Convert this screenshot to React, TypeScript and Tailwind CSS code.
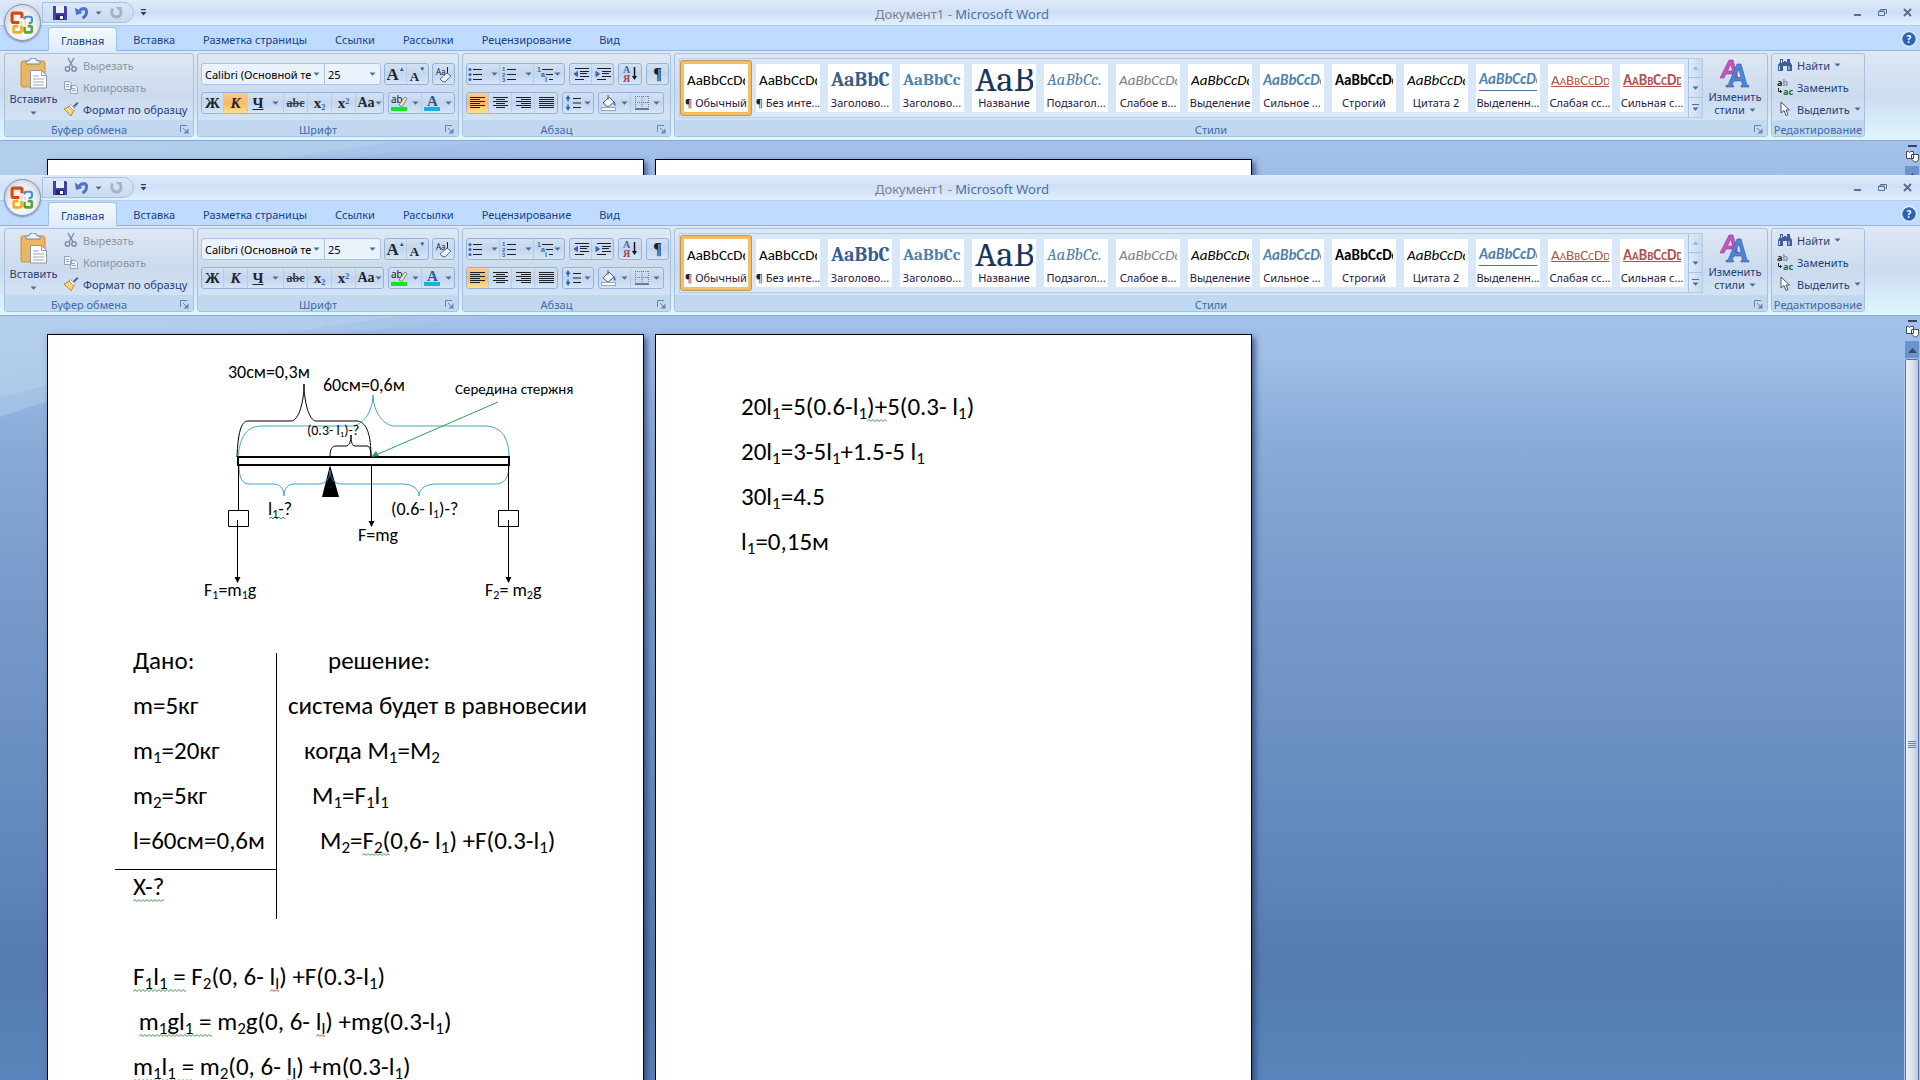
import type { ReactNode } from 'react';
import clsx from 'clsx';

const TABS = ['Главная', 'Вставка', 'Разметка страницы', 'Ссылки', 'Рассылки', 'Рецензирование', 'Вид'];

const CALIBRI = "font-['Carlito','Calibri','Lato',sans-serif]";
const CAMBRIA = "font-['Caladea','Cambria','Liberation_Serif',serif]";

const STYLES = [
  { name: '¶ Обычный', sample: 'AaBbCcDd', look: 'text-[15px] text-black' },
  { name: '¶ Без инте...', sample: 'AaBbCcDd', look: 'text-[15px] text-black' },
  { name: 'Заголово...', sample: 'AaBbCc', look: `${CAMBRIA} text-[20px] font-bold text-[#365f8f]` },
  { name: 'Заголово...', sample: 'AaBbCc', look: `${CAMBRIA} text-[17px] font-bold text-[#4f81ad]` },
  { name: 'Название', sample: 'AaB', look: `${CAMBRIA} text-[36px] text-[#17365d]` },
  { name: 'Подзагол...', sample: 'AaBbCc.', look: `${CAMBRIA} text-[17px] italic text-[#4f81ad]` },
  { name: 'Слабое в...', sample: 'AaBbCcDd', look: 'text-[15px] italic text-[#808080]' },
  { name: 'Выделение', sample: 'AaBbCcDd', look: 'text-[15px] italic text-black' },
  { name: 'Сильное ...', sample: 'AaBbCcDd', look: 'text-[15px] italic font-bold text-[#4f81ad]' },
  { name: 'Строгий', sample: 'AaBbCcDd', look: 'text-[15px] font-bold text-black' },
  { name: 'Цитата 2', sample: 'AaBbCcDd', look: 'text-[15px] italic text-black' },
  { name: 'Выделенн...', sample: 'AaBbCcDd', look: 'text-[15px] italic font-bold text-[#4f81ad] border-b border-[#4f6f9d]' },
  { name: 'Слабая сс...', sample: 'AaBbCcDd', look: 'text-[15px] [font-variant:small-caps] underline text-[#b0514e]' },
  { name: 'Сильная с...', sample: 'AaBbCcDd', look: 'text-[15px] [font-variant:small-caps] underline font-bold text-[#b0514e]' },
];

function Arrow({ className }: { className?: string }) {
  return (
    <svg width="7" height="4" viewBox="0 0 7 4" className={clsx('shrink-0', className)}>
      <path d="M0.5 0.5h6L3.5 3.8z" fill="#4a6d9e" />
    </svg>
  );
}

// Row of joined ribbon buttons
function Strip({ children }: { children: ReactNode }) {
  return (
    <div className="flex h-[22px] shrink-0 rounded-[3px] border border-[#93b3da] divide-x divide-[#b8cce4] overflow-hidden bg-linear-to-b from-[#d3e1f2] via-[#c3d6ee] to-[#d6e5f6]">
      {children}
    </div>
  );
}

function Tool({ label, className, active, children }: { label: string; className: string; active?: boolean; children: ReactNode }) {
  return (
    <button
      aria-label={label}
      className={clsx(
        'flex h-full items-center justify-center gap-1 leading-none',
        active && 'bg-linear-to-b from-[#fbc98d] via-[#fdb863] to-[#fde28a]',
        className,
      )}
    >
      {children}
    </button>
  );
}

function Group({ title, launcher, className, children }: { title: string; launcher?: boolean; className?: string; children: ReactNode }) {
  return (
    <section
      className={clsx(
        'flex shrink-0 flex-col overflow-hidden rounded-[3px] border border-[#a5c2e0] bg-linear-to-b from-[#dfe8f4] via-[#cbdaed] to-[#d8e8f8]',
        className,
      )}
    >
      <div className="flex h-[68px]">{children}</div>
      <footer className="flex h-[16px] items-center bg-[#c1d8f0] pt-0.5 text-[#3e6aaa]">
        <span className="flex-1 text-center">{title}</span>
        {launcher && (
          <button aria-label={`${title}: параметры`} className="ml-[7px] mr-1">
            <svg width="9" height="9" viewBox="0 0 9 9" fill="none">
              <path d="M0.5 7V0.5H7" stroke="#6583ac" />
              <path d="M3 3l4 4" stroke="#6583ac" />
              <path d="M8.5 3.5v5h-5z" fill="#6583ac" />
            </svg>
          </button>
        )}
      </footer>
    </section>
  );
}

function OfficeOrb() {
  return (
    <button aria-label="Office" className="absolute left-1 top-1 z-10 flex size-[37px] items-center justify-center rounded-full border border-[#8494ab] bg-radial-[at_50%_65%] from-white via-[#edf0f5] to-[#b4bfcf] shadow-[0_1px_2px_rgba(60,80,120,.6)]">
      <svg width="25" height="25" viewBox="0 0 24 24" fill="none">
        <path d="M9 12H3.500a1.500 1.500 0 0 1-1.500-1.500V4.500A1.500 1.500 0 0 1 3.500 3H10a1.500 1.500 0 0 1 1.500 1.500V8" stroke="#d9480f" strokeWidth="3" />
        <path d="M14 9V8a1.500 1.500 0 0 1 1.500-1.500h4A1.500 1.500 0 0 1 21 8v3a1.500 1.500 0 0 1-1.500 1.500H18" stroke="#3f8fd2" strokeWidth="2" />
        <path d="M11 15v5a1.500 1.500 0 0 1-1.500 1.500H5A1.500 1.500 0 0 1 3.500 20v-3A1.500 1.500 0 0 1 5 15.500h3" stroke="#f2ab1d" strokeWidth="2.500" />
        <path d="M14 16v4a1.500 1.500 0 0 0 1.500 1.500h4A1.500 1.500 0 0 0 21 20v-3a1.500 1.500 0 0 0-1.500-1.500H17" stroke="#5da33a" strokeWidth="2.500" />
        <path d="M11 11.500h1M14 11.500h1M11 13.500h1M14 13.500h1" stroke="#c98a3a" />
      </svg>
    </button>
  );
}

function TitleBar() {
  return (
    <header className="flex h-[26px] items-center border-b border-[#b0cfee] bg-linear-to-b from-[#dfebfb] via-[#cfdff6] to-[#e1f0fe]">
      <div className="flex flex-1 items-center">
        <div className="ml-[42px] flex h-[21px] w-[92px] items-center gap-2 rounded-r-full border border-[#a9c1e0] bg-linear-to-b from-[#dbe7f7] to-[#c9daf1] pl-[10px]">
          <button aria-label="Сохранить">
            <svg width="14" height="14" viewBox="0 0 14 14">
              <path d="M0 0h13l1 1v13H0z" fill="#3d43a6" />
              <rect x="3" y="0" width="8" height="7" fill="#e9effc" />
              <rect x="3" y="9" width="8" height="5" fill="#23286e" />
              <rect x="7" y="10" width="3" height="3" fill="#fff" />
            </svg>
          </button>
          <button aria-label="Отменить" className="flex items-center gap-1.5">
            <svg width="14" height="13" viewBox="0 0 14 13" fill="none">
              <path d="M4 5C8 1 12 2.500 11.500 6.500 11.300 9 9.500 11 7.500 12" stroke="#4a74c6" strokeWidth="3" />
              <path d="M0 1.500l1 7.500 6.500-2z" fill="#4a74c6" />
            </svg>
            <Arrow />
          </button>
          <button aria-label="Вернуть">
            <svg width="13" height="13" viewBox="0 0 13 13" fill="none">
              <path d="M2.500 2.500C0.500 8 3 11 6.500 11S12 8 10.500 3.500" stroke="#a3b3cc" strokeWidth="2.800" />
              <path d="M5.500 1h6v5.500z" fill="#a3b3cc" />
            </svg>
          </button>
        </div>
        <button aria-label="Настройка панели быстрого доступа" className="ml-1.5">
          <svg width="7" height="7" viewBox="0 0 7 7">
            <path d="M1 0h5v1.200H1zM0.500 3h6L3.500 6.500z" fill="#27406f" />
          </svg>
        </button>
      </div>
      <h1 className="pl-3 pt-1 text-[13px] text-[#7c808c]">
        Документ1 - <span className="text-[#4a72a8]">Microsoft Word</span>
      </h1>
      <div className="flex flex-1 items-center justify-end gap-[16px] pr-[8px] text-[#5b6f8e]">
        <button aria-label="Свернуть">
          <svg width="9" height="9" viewBox="0 0 9 9"><path d="M1 6h7v2H1z" fill="currentColor" /></svg>
        </button>
        <button aria-label="Восстановить">
          <svg width="9" height="9" viewBox="0 0 9 9" fill="none" stroke="currentColor">
            <path d="M2.500 2.500v-1h6v4h-1M0.500 3h6M0.500 3.500h6v4h-6z" />
          </svg>
        </button>
        <button aria-label="Закрыть">
          <svg width="9" height="9" viewBox="0 0 9 9" stroke="currentColor" strokeWidth="2"><path d="M1 1l7 7M8 1L1 8" /></svg>
        </button>
      </div>
    </header>
  );
}

function TabRow() {
  return (
    <nav className="flex h-[25px] items-end gap-1 border-b border-[#8fb4e0] bg-[#bfdbff] pl-[48px] pr-1 text-[#15428b]">
      {TABS.map((tab, i) => (
        <button
          key={tab}
          className={clsx(
            'px-[12px] pt-0.5',
            i === 0
              ? '-mb-px h-[24px] rounded-t-[4px] border border-b-0 border-[#9dc3ea] bg-linear-to-b from-[#f4f9ff] to-[#e2ebf6] px-[10px]'
              : 'h-[23px]',
          )}
        >
          {tab}
        </button>
      ))}
      <button aria-label="Справка" className="mb-1 ml-auto flex size-[14px] items-center justify-center rounded-full border border-[#5d86bd] bg-[#2a62b4] text-[10px] font-bold leading-none text-white outline outline-white/70">
        ?
      </button>
    </nav>
  );
}

function Clipboard() {
  return (
    <Group title="Буфер обмена" launcher className="w-[190px]">
      <button className="flex w-[57px] flex-col items-center pt-1 text-[#1e3f7d]">
        <svg width="28" height="31" viewBox="0 0 28 31">
          <rect x="1" y="3" width="24" height="26" rx="2" fill="#e9b662" stroke="#c3913f" />
          <path d="M6 6V3h3a4 3 0 0 1 8 0h3v3z" fill="#f1f3f6" stroke="#7b8696" />
          <path d="M10.500 12.500h11l5 5v12.500h-16z" fill="#fff" stroke="#8995a8" />
          <path d="M21.500 12.500v5h5M13 18h6M13 21h11M13 24h11M13 27h11" stroke="#9aa5b8" fill="none" />
        </svg>
        <span className="mt-[2px] leading-[16px]">Вставить</span>
        <Arrow className="mt-1" />
      </button>
      <div className="flex flex-col pl-px [&>button]:h-[22px]">
        <button disabled className="flex items-center gap-1 text-[#8d95a3]">
          <svg width="16" height="16" viewBox="0 0 16 16" fill="none" stroke="#7d90ae" strokeWidth="1.500">
            <path d="M5 1l5 9M11 1L6 10" />
            <circle cx="4.500" cy="12" r="2.200" />
            <circle cx="11" cy="12" r="2.200" />
          </svg>
          Вырезать
        </button>
        <button disabled className="flex items-center gap-1 text-[#8d95a3]">
          <svg width="16" height="16" viewBox="0 0 16 16" fill="#eef2f8" stroke="#94a4bd">
            <path d="M1.500 2.500h5l2 2v6h-7zM7.500 6.500h5l2 2v6h-7z" />
            <path d="M3 5.500h3M3 7.500h3M9 9.500h3M9 11.500h4" />
          </svg>
          Копировать
        </button>
        <button className="flex items-center gap-1 text-[#1e3f7d]">
          <svg width="16" height="16" viewBox="0 0 16 16">
            <path d="M1 8l6-3 4 4-3 6z" fill="#f4d77a" stroke="#b08d34" />
            <path d="M6 5l5 5 1.500-1.500-5-5z" fill="#fff" stroke="#7b7f8c" strokeWidth=".7" />
            <path d="M10 5l4-4 1.500 1.500-4 4z" fill="#5a5fa8" />
          </svg>
          Формат по образцу
        </button>
      </div>
    </Group>
  );
}

function Combo({ label, value, className }: { label: string; value: string; className: string }) {
  return (
    <div className={clsx('relative h-[22px] border border-[#a9c3e6] bg-[#eaf2fb]', className)}>
      <select aria-label={label} className="h-full w-full appearance-none overflow-hidden pl-[3px] pr-[13px] text-clip text-black">
        <option>{value}</option>
      </select>
      <Arrow className="pointer-events-none absolute right-1 top-2" />
    </div>
  );
}

const serifGlyph = "font-['Liberation_Serif',serif] font-bold text-[#20242c]";

function FontGroup({ italic }: { italic?: boolean }) {
  return (
    <Group title="Шрифт" launcher className="w-[262px]">
      <div className="flex flex-col gap-[7px] pl-[3px] pt-[9px]">
        <div className="flex gap-[3px]">
          <div className="flex">
            <Combo label="Шрифт" value="Calibri (Основной те" className="w-[124px] rounded-l-[3px]" />
            <Combo label="Размер шрифта" value="25" className="-ml-px w-[57px] rounded-r-[3px]" />
          </div>
          <Strip>
            <Tool label="Увеличить размер" className={`w-[22px] ${serifGlyph}`}>
              <span className="text-[17px]">A</span>
              <span className="-ml-1 mb-2.5 text-[6px] text-[#2b4f8f]">▲</span>
            </Tool>
            <Tool label="Уменьшить размер" className={`w-[21px] ${serifGlyph}`}>
              <span className="mt-1 text-[13px]">A</span>
              <span className="-ml-1 mb-2.5 text-[6px] text-[#2b4f8f]">▼</span>
            </Tool>
          </Strip>
          <Strip>
            <Tool label="Очистить формат" className="w-[21px]">
              <svg width="17" height="17" viewBox="0 0 17 17">
                <text x="1" y="9" className="font-['Noto_Sans',sans-serif] text-[8px]" fill="#222">Aa</text>
                <path d="M12.500 1v8" stroke="#222" />
                <path d="M5 13l7-6 4 3-6 6-3-1z" fill="#eef1f8" stroke="#5e6880" />
              </svg>
            </Tool>
          </Strip>
        </div>
        <div className="flex gap-1">
          <Strip>
            <Tool label="Полужирный" className={`w-[22px] text-[15px] ${serifGlyph}`}>Ж</Tool>
            <Tool label="Курсив" active={italic} className={`w-[24px] text-[15px] italic ${serifGlyph}`}>К</Tool>
            <Tool label="Подчеркнутый" className={`w-[36px] text-[15px] ${serifGlyph}`}>
              <span className="mr-1 underline">Ч</span>
              <Arrow />
            </Tool>
            <Tool label="Зачеркнутый" className="w-[24px] font-['Liberation_Serif',serif] text-[12px] font-bold line-through text-[#3a3e46]">abc</Tool>
            <Tool label="Подстрочный" className={`w-[24px] text-[15px] ${serifGlyph}`}>
              <span>x<sub className="text-[8px] text-[#2b5fb0]">2</sub></span>
            </Tool>
            <Tool label="Надстрочный" className={`w-[24px] text-[15px] ${serifGlyph}`}>
              <span>x<sup className="text-[8px] text-[#2b5fb0]">2</sup></span>
            </Tool>
            <Tool label="Регистр" className={`w-[27px] text-[14px] ${serifGlyph}`}>
              <span className="-mr-1">Aa</span>
              <Arrow />
            </Tool>
          </Strip>
          <Strip>
            <Tool label="Цвет выделения" className="w-[33px]">
              <svg width="17" height="18" viewBox="0 0 17 18">
                <text x="0" y="9" className="font-['Noto_Sans',sans-serif] text-[10px]" fill="#222">ab</text>
                <path d="M8 11l6-8 2 1.500-5 8z" fill="#f6f0b4" stroke="#5e6880" strokeWidth=".8" />
                <rect x="0" y="13" width="16" height="4" fill="#12e51c" />
              </svg>
              <Arrow />
            </Tool>
            <Tool label="Цвет текста" className="w-[32px]">
              <svg width="17" height="18" viewBox="0 0 17 18">
                <text x="3" y="12" className="font-['Liberation_Serif',serif] text-[15px] font-bold" fill="#2f5a9a">A</text>
                <rect x="0" y="13" width="16" height="4" fill="#1bb0d8" />
              </svg>
              <Arrow />
            </Tool>
          </Strip>
        </div>
      </div>
    </Group>
  );
}

function Lines({ d, className }: { d: string; className?: string }) {
  return (
    <svg width="15" height="14" viewBox="0 0 15 14" fill="none" stroke="#1c1f26" className={className}>
      <path d={d} />
    </svg>
  );
}

const ListIcon = ({ marks }: { marks: ReactNode }) => (
  <svg width="15" height="15" viewBox="0 0 15 15" fill="none" stroke="#1c1f26" className="mr-1">
    <path d="M5 2.500h9M5 7.500h9M5 12.500h9" />
    <g fill="#3a66ad" stroke="none" className="font-['Liberation_Sans',sans-serif] text-[6px] font-bold">{marks}</g>
  </svg>
);

function ParagraphGroup() {
  return (
    <Group title="Абзац" launcher className="w-[209px]">
      <div className="flex flex-col gap-[7px] pl-[3px] pt-[9px]">
        <div className="flex gap-1">
          <Strip>
            <Tool label="Маркеры" className="w-[33px]">
              <ListIcon marks={<><circle cx="2" cy="2.500" r="1.500" /><circle cx="2" cy="7.500" r="1.500" /><circle cx="2" cy="12.500" r="1.500" /></>} />
              <Arrow />
            </Tool>
            <Tool label="Нумерация" className="w-[34px]">
              <ListIcon marks={<><text x="0" y="4">1</text><text x="0" y="10">2</text><text x="0" y="15">3</text></>} />
              <Arrow />
            </Tool>
            <Tool label="Многоуровневый список" className="w-[30px]">
              <svg width="17" height="15" viewBox="0 0 17 15" fill="none" stroke="#1c1f26">
                <path d="M5 2.500h11M9 7.500h7M12 12.500h4" />
                <g fill="#3a66ad" stroke="none" className="font-['Liberation_Sans',sans-serif] text-[7px] font-bold"><text x="0" y="5">1</text><text x="4" y="10">a</text><text x="8" y="15">i</text></g>
              </svg>
              <Arrow className="-ml-1" />
            </Tool>
          </Strip>
          <Strip>
            {['M4.500 4.500L1 7l3.500 2.500z', 'M1 4.500L4.500 7 1 9.500z'].map((head, i) => (
              <Tool key={head} label={i ? 'Увеличить отступ' : 'Уменьшить отступ'} className={i ? 'w-[21px]' : 'w-[22px]'}>
                <svg width="16" height="14" viewBox="0 0 16 14" fill="none" stroke="#1c1f26">
                  <path d="M2 1.500h14M7 4.500h9M7 6.500h7M7 9.500h9M2 12.500h9" />
                  <path d={head} fill="#2f62b8" stroke="#2f62b8" />
                </svg>
              </Tool>
            ))}
          </Strip>
          <Strip>
            <Tool label="Сортировка" className="w-[22px]">
              <svg width="16" height="18" viewBox="0 0 16 18">
                <g className="font-['Liberation_Serif',serif] text-[10px] font-bold">
                  <text x="1" y="8" fill="#3a66ad">А</text>
                  <text x="1" y="17" fill="#a33f45">Я</text>
                </g>
                <path d="M12.500 2v10" stroke="#111" strokeWidth="1.500" />
                <path d="M10 11h5l-2.500 4z" fill="#111" />
              </svg>
            </Tool>
          </Strip>
          <Strip>
            <Tool label="Непечатаемые знаки" className="w-[21px] font-['Liberation_Serif',serif] text-[16px] font-bold text-[#1c1f26]">¶</Tool>
          </Strip>
        </div>
        <div className="flex gap-1">
          <Strip>
            <Tool label="По левому краю" active className="w-[22px]"><Lines d="M0 1.500h15M0 3.500h10M0 5.500h15M0 7.500h10M0 9.500h15M0 11.500h10" /></Tool>
            <Tool label="По центру" className="w-[23px]"><Lines d="M0 1.500h15M3 3.500h9M0 5.500h15M3 7.500h9M0 9.500h15M3 11.500h9" /></Tool>
            <Tool label="По правому краю" className="w-[23px]"><Lines d="M0 1.500h15M5 3.500h10M0 5.500h15M5 7.500h10M0 9.500h15M5 11.500h10" /></Tool>
            <Tool label="По ширине" className="w-[22px]"><Lines d="M0 1.500h15M0 3.500h15M0 5.500h15M0 7.500h15M0 9.500h15M0 11.500h15" /></Tool>
          </Strip>
          <Strip>
            <Tool label="Междустрочный интервал" className="w-[30px]">
              <svg width="17" height="16" viewBox="0 0 17 16" fill="none" stroke="#1c1f26">
                <path d="M8 3.500h8M8 8h8M8 12.500h8" />
                <path d="M3 3v3.500M3 9.500V13" stroke="#2f62b8" strokeWidth="1.500" />
                <path d="M0.500 4L3 0l2.500 4zM0.500 12L3 16l2.500-4z" fill="#2f62b8" stroke="none" />
              </svg>
              <Arrow className="-ml-0.5" />
            </Tool>
          </Strip>
          <Strip>
            <Tool label="Заливка" className="w-[32px]">
              <svg width="16" height="16" viewBox="0 0 16 16">
                <path d="M2 8l6-6 5 5-6 5z" fill="#f4f6fa" stroke="#566482" />
                <path d="M7 0v5" stroke="#566482" />
                <path d="M13 6c2 2 2 4 1 5-1-1-2-2-1-5" fill="#3f6fc4" />
                <rect x="0.500" y="12.500" width="14" height="3" fill="#fff" stroke="#9aa5b8" />
              </svg>
              <Arrow />
            </Tool>
            <Tool label="Границы" className="w-[32px]">
              <svg width="14" height="14" viewBox="0 0 14 14" fill="none" stroke="#6f7f9c">
                <path d="M0.500 0v12M13.500 0v12M7 0v12M0 0.500h14M0 6.500h14" strokeDasharray="1 1" />
                <path d="M0 13h14" stroke="#4a5878" strokeWidth="1.500" />
              </svg>
              <Arrow />
            </Tool>
          </Strip>
        </div>
      </div>
    </Group>
  );
}

function StylesGroup() {
  return (
    <Group title="Стили" launcher className="w-[1094px]">
      <div className="ml-1 mt-1 flex h-[60px] items-center border border-[#b3cde8] bg-[#d9e8f8]">
        {STYLES.map((s, i) => (
          <button
            key={i}
            className={clsx(
              'flex h-[56px] w-[72px] border-4',
              i === 0 ? 'rounded-[3px] border-[#f4bf62] outline-1 -outline-offset-1 outline-[#c2955a]' : 'border-transparent',
            )}
          >
            <span className="flex h-[48px] w-[64px] flex-col overflow-hidden bg-white px-[3px]">
              <span className="flex h-[31px] flex-col items-start justify-center">
                <span className={clsx('w-[58px] shrink-0 overflow-hidden text-left leading-[22px]', !s.look.includes('Caladea') && CALIBRI, s.look)}>{s.sample}</span>
              </span>
              <span className="-mx-1 whitespace-nowrap text-center leading-[16px] text-[#1a1a48]">{s.name}</span>
            </span>
          </button>
        ))}
        <div className="flex w-[14px] flex-col divide-y divide-[#a9c3e6] border-l border-[#a9c3e6] bg-linear-to-r from-[#dfeaf8] to-[#c5d8f0]">
          <button aria-label="Вверх" className="flex h-[19px] items-center justify-center"><Arrow className="rotate-180 opacity-40" /></button>
          <button aria-label="Вниз" className="flex h-[20px] items-center justify-center"><Arrow /></button>
          <button aria-label="Дополнительно" className="flex h-[19px] flex-col items-center justify-center gap-0.5">
            <i className="h-px w-[7px] bg-[#4a6d9e]" />
            <Arrow />
          </button>
        </div>
      </div>
      <button className="flex flex-1 flex-col items-center pt-[5px] text-[#1e3f7d]">
        <svg width="32" height="30" viewBox="0 0 32 30">
          <path fillRule="evenodd" d="M1 19L10 1h4l5 18h-4l-1-4H7l-2 4zM8.500 12h5l-1.700-7z" fill="#c254ba" stroke="#8f3a93" strokeWidth=".6" />
          <path fillRule="evenodd" d="M7 28v-1.500l2-.500L18 5h4l6 21 2 .500V28h-8v-1.500l1.500-.500-1-4H15l-2 4 1.500.500V28zM16 18.500h6L20 10z" fill="#4c86d2" stroke="#2b5ea8" strokeWidth=".6" />
        </svg>
        <span className="mt-px leading-[13px]">Изменить</span>
        <span className="flex items-center gap-1 leading-[13px]">стили <Arrow /></span>
      </button>
    </Group>
  );
}

function EditingGroup() {
  return (
    <Group title="Редактирование" className="w-[94px]">
      <div className="flex flex-col pl-[5px] text-[#1e3f7d] [&>button]:flex [&>button]:h-[22px] [&>button]:items-center [&>button]:gap-1">
        <button>
          <svg width="16" height="14" viewBox="0 0 16 14" fill="#3f5f98">
            <path d="M3 1h3v3h1v-1h2v1h1V1h3v3l2 3v6h-5V8H8.500 6v5H1V7l2-3z" />
            <path d="M2.500 8v4M12 8v4M4.500 2v3" stroke="#d5e2f4" />
          </svg>
          Найти <Arrow />
        </button>
        <button>
          <svg width="16" height="16" viewBox="0 0 16 16" className="font-['Noto_Sans',sans-serif] text-[9px] font-bold">
            <text x="0" y="7" fill="#20242c">a<tspan fill="#8d95a3">b</tspan></text>
            <text x="6" y="16" fill="#1e6b35">ac</text>
            <path d="M1.500 9v3.500h3M3 11l1.500 1.500L3 14" fill="none" stroke="#20242c" />
          </svg>
          Заменить
        </button>
        <button>
          <svg width="16" height="16" viewBox="0 0 16 16">
            <path d="M4 1v11l3-2.500 2 5 2-1-2-4.500h3.500z" fill="#fff" stroke="#44536f" />
          </svg>
          Выделить <Arrow />
        </button>
      </div>
    </Group>
  );
}

function Scrollbar() {
  return (
    <aside className="flex w-[16px] shrink-0 flex-col items-center pt-1">
      <i className="h-0.5 w-[9px] shrink-0 bg-[#2f4468]" />
      <svg width="13" height="13" viewBox="0 0 13 13" className="my-[3px] shrink-0" fill="#fff" stroke="#3c4a63">
        <path d="M0.500 1.500h2l1 1 1-1h3v7h-7zM5.500 4.500h7v5l-2 2.500h-2l-3-3z" />
      </svg>
      <button aria-label="Прокрутить вверх" className="flex h-[18px] w-[14px] shrink-0 items-center justify-center bg-[#6c94cc]">
        <svg width="9" height="5" viewBox="0 0 9 5"><path d="M0 5l4.500-5L9 5z" fill="#3b4a66" /></svg>
      </button>
      <div className="flex h-[770px] w-[14px] shrink-0 flex-col items-center justify-center gap-px rounded-t-[2px] border border-[#5573a8] bg-linear-to-r from-[#eef2f8] via-[#dce4ee] to-[#b9c7da] outline outline-[#a9c5ea]">
        {[0, 1, 2, 3].map((n) => <i key={n} className="h-px w-2 bg-[#6d7f9b]" />)}
      </div>
    </aside>
  );
}

// Pale sweep across the top left of the work area
function Swoosh() {
  return (
    <svg className="absolute left-0 top-0" width="500" height="110" viewBox="0 0 500 110">
      <defs>
        <linearGradient id="sweep" x1="0" y1="0" x2="1" y2="0">
          <stop offset="0" stopColor="#b9d2ee" stopOpacity=".45" />
          <stop offset="1" stopColor="#b9d2ee" stopOpacity=".2" />
        </linearGradient>
      </defs>
      <path d="M0 0H490Q220 25 0 101z" fill="url(#sweep)" />
      <path d="M0 0H400Q180 30 0 82z" fill="#bcd6ee" fillOpacity=".4" />
    </svg>
  );
}

function WordWindow({ italic, className, children }: { italic?: boolean; className: string; children: ReactNode }) {
  return (
    <div className={clsx('relative flex flex-col overflow-hidden', className)}>
      <OfficeOrb />
      <TitleBar />
      <TabRow />
      <div className="relative flex h-[90px] shrink-0 gap-[3px] border-b border-[#8aaad0] bg-linear-to-b from-[#dfe8f4] via-[#cddcf0] to-[#dff6fd] pl-1 pt-0.5 pb-[3px]">
        <Clipboard />
        <FontGroup italic={italic} />
        <ParagraphGroup />
        <StylesGroup />
        <EditingGroup />
      </div>
      <main className="relative flex min-h-0 flex-1 overflow-hidden bg-[linear-gradient(#a3c1e9_0px,#9fbee8_40px,#8aacd9_120px,#7b9dcd_250px,#6b91c2_420px,#5f85ba_560px,#547cb0_650px,#5a84bb_765px)]">
        <Swoosh />
        <div className="relative flex min-w-0 flex-1 gap-[11px] pl-[47px] pt-[18px]">{children}</div>
        <Scrollbar />
      </main>
    </div>
  );
}

function Page({ children }: { children?: ReactNode }) {
  return (
    <article className={`${CALIBRI} h-[900px] w-[597px] shrink-0 whitespace-pre border border-black bg-white text-[25px] leading-[45px] text-black shadow-[3px_3px_6px_rgba(30,50,90,.7)]`}>
      {children}
    </article>
  );
}

const Sub = ({ children }: { children: ReactNode }) => <sub className="text-[17px]">{children}</sub>;

// Proofing squiggle under a run of text
function Wavy({ red, children }: { red?: boolean; children: ReactNode }) {
  return (
    <span className="relative">
      {children}
      <svg className="absolute bottom-0 left-0 h-[3px] w-full" fill="none">
        <path d={'M0 2.500' + 'l2 -2l2 2'.repeat(40)} stroke={red ? '#c23b3b' : '#3f8f4f'} />
      </svg>
    </span>
  );
}

function LeverDiagram() {
  return (
    <svg width="595" height="303" viewBox="0 0 595 303" fill="none" stroke="#000" className="block">
      <path d="M189 122C190 98 193 86 200 86H243C251 86 256 66 256 49C256 66 261 86 268 86H310C319 88 323 100 323 122" />
      <g stroke="#3fa3c8">
        <path d="M190 122C192 101 199 91 214 91H303C315 91 325 76 325 60C325 76 335 91 347 91H436C452 91 461 101 461 122" />
        <path d="M191 130C191 143 194 149 202 149H226C231 149 236 153 236 161C236 153 240 149 246 149H270C278 149 282 143 282 135C282 143 286 149 294 149H355C363 149 371 153 371 161C371 153 379 149 387 149H447C456 149 461 143 461 130" />
      </g>
      <path d="M282 122C282 114 284 111 288 111H298C301 111 303 107 303 100C303 107 304 111 307 111H319Q323 111 323 122" />
      <rect x="190" y="122" width="271" height="8" strokeWidth="2" fill="#fff" />
      <path d="M282 130l9 32h-17z" fill="#000" stroke="none" />
      <path d="M278 147Q282 143 282 135Q282 143 286 147" stroke="#2d6f9a" />
      <path d="M323.500 131V187M190.500 131v44M189.500 185v58M460.500 131v44M460.500 185v58" />
      <path d="M320.500 186h6l-3 6zM186.500 242h6l-3 6zM457.500 242h6l-3 6z" fill="#000" stroke="none" />
      <path d="M180.500 175.500h20v16h-20zM450.500 175.500h20v16h-20z" />
      <path d="M450 67L328 120" stroke="#2f9a5f" />
      <path d="M323 122l5-6 3 5z" fill="#2f9a5f" stroke="none" />
      <path d={'M221 184' + 'l2 -2l2 2'.repeat(4)} stroke="#3f8f4f" />
      <g fill="#000" stroke="none" className="text-[18px]">
        <text x="180" y="43">30см=0,3м</text>
        <text x="275" y="56">60см=0,6м</text>
        <text x="407" y="59" className="text-[15px]">Середина стержня</text>
        <text x="259" y="100" className="text-[14px]">(0.3- l<tspan dy="2" className="text-[9px]">1</tspan><tspan dy="-2">)-?</tspan></text>
        <text x="220" y="180">l<tspan dy="3" className="text-[12px]">1</tspan><tspan dy="-3">-?</tspan></text>
        <text x="343" y="180">(0.6- l<tspan dy="3" className="text-[12px]">1</tspan><tspan dy="-3">)-?</tspan></text>
        <text x="310" y="206">F=mg</text>
        <text x="156" y="261">F<tspan dy="3" className="text-[12px]">1</tspan><tspan dy="-3">=m</tspan><tspan dy="3" className="text-[12px]">1</tspan><tspan dy="-3">g</tspan></text>
        <text x="437" y="261">F<tspan dy="3" className="text-[12px]">2</tspan><tspan dy="-3">= m</tspan><tspan dy="3" className="text-[12px]">2</tspan><tspan dy="-3">g</tspan></text>
      </g>
    </svg>
  );
}

export default function App() {
  return (
    <div className="flex h-screen flex-col overflow-hidden font-['Noto_Sans','Open_Sans',sans-serif] text-[11px] leading-[15px]">
      <WordWindow italic className="h-[175px] shrink-0">
        <Page />
        <Page />
      </WordWindow>
      <WordWindow className="flex-1">
        <Page>
          <LeverDiagram />
          <div className="flex">
            <div className="mb-[35px] ml-[67px] mt-[15px] h-[266px] w-[162px] border-r border-black">
              <div className="-mt-[15px] pb-[6px] pl-[18px]">
                <p>Дано:</p>
                <p>m=5кг</p>
                <p>m<Sub>1</Sub>=20кг</p>
                <p>m<Sub>2</Sub>=5кг</p>
                <p>l=60см=0,6м</p>
              </div>
              <p className="border-t border-black pl-[18px] leading-[34px]"><Wavy>X-?</Wavy></p>
            </div>
            <div className="pl-[11px]">
              <p className="pl-10">решение:</p>
              <p>система будет в равновесии</p>
              <p className="pl-4">когда M<Sub>1</Sub>=M<Sub>2</Sub></p>
              <p className="pl-6">M<Sub>1</Sub>=F<Sub>1</Sub>l<Sub>1</Sub></p>
              <p className="pl-8">M<Sub>2</Sub>=<Wavy>F<Sub>2</Sub>(</Wavy>0,6- l<Sub>1</Sub>) +F(0.3-l<Sub>1</Sub>)</p>
            </div>
          </div>
          <div className="pl-[85px]">
            <p><Wavy>F<Sub>1</Sub>l<Sub>1</Sub> =</Wavy> F<Sub>2</Sub>(0, 6- <Wavy red>l<Sub>l</Sub></Wavy>) +F(0.3-l<Sub>1</Sub>)</p>
            <p> <Wavy>m<Sub>1</Sub>gl<Sub>1</Sub> =</Wavy> m<Sub>2</Sub>g(0, 6- <Wavy red>l<Sub>l</Sub></Wavy>) +mg(0.3-l<Sub>1</Sub>)</p>
            <p><Wavy>m<Sub>1</Sub>l<Sub>1</Sub> =</Wavy> m<Sub>2</Sub>(0, 6- <Wavy red>l<Sub>l</Sub></Wavy>) +m(0.3-l<Sub>1</Sub>)</p>
          </div>
        </Page>
        <Page>
          <div className="pl-[85px] pt-[49px]">
            <p>20l<Sub>1</Sub>=5(0.6-l<Sub>1</Sub><Wavy>)+</Wavy>5(0.3- l<Sub>1</Sub>)</p>
            <p>20l<Sub>1</Sub>=3-5l<Sub>1</Sub>+1.5-5 l<Sub>1</Sub></p>
            <p>30l<Sub>1</Sub>=4.5</p>
            <p>l<Sub>1</Sub>=0,15м</p>
          </div>
        </Page>
      </WordWindow>
    </div>
  );
}
